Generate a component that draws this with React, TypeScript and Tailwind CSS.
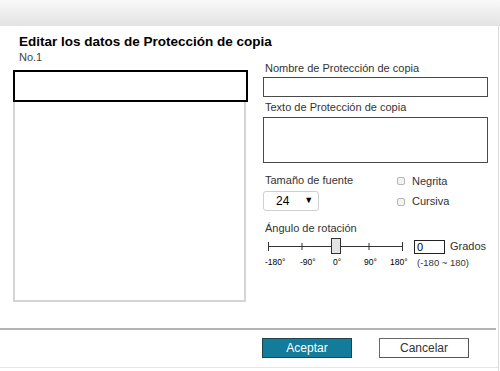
import React from "react";

const font = { fontFamily: '"Liberation Sans", Arial, sans-serif' };

export default function App() {
  return (
    <div className="w-[500px] h-[371px] bg-white flex flex-col overflow-hidden text-[#333]" style={font}>
      <div className="h-[26px] shrink-0 bg-gradient-to-b from-[#f9f9f9] to-[#e3e3e3]" />
      <div className="w-[499px] flex-1 flex flex-col border-r border-[#d9d9d9]">
        <div className="h-[302px] flex flex-col">
          <div className="pl-[19px] pt-[8px] h-[24px] text-[13.5px] leading-[16px] font-bold text-black">
            Editar los datos de Protección de copia
          </div>
          <div className="flex">
            <div className="ml-[13px] w-[235px] flex flex-col">
              <div className="pl-[6px] text-[11px] leading-[14px] h-[14px] text-[#444]">No.1</div>
              <div className="mt-[6px] h-[32px] border-2 border-black bg-white" />
              <div className="w-[233px] h-[200px] border-2 border-t-0 border-[#d4d4d4]" />
            </div>
            <div className="ml-[15px] w-[225px] pt-[12px] flex flex-col text-[11px]">
              <div className="h-[13px] leading-[13px] pl-[2px]">Nombre de Protección de copia</div>
              <div className="mt-[2px] h-[20px] border border-[#4a4a4a]" />
              <div className="mt-[4px] h-[13px] leading-[13px] pl-[2px]">Texto de Protección de copia</div>
              <div className="mt-[3px] h-[46px] border border-[#4a4a4a]" />
              <div className="mt-[11px] flex">
                <div className="w-[134px] flex flex-col">
                  <div className="h-[13px] leading-[13px] pl-[2px]">Tamaño de fuente</div>
                  <div className="mt-[4px] w-[56px] h-[20px] rounded-[3px] border border-[#cfcfcf] flex items-center text-[12px] text-black">
                    <span className="ml-[12px]">24</span>
                    <span className="ml-[15px] text-[9px]">▼</span>
                  </div>
                </div>
                <div className="flex flex-col">
                  <div className="h-[14px] flex items-center">
                    <span className="w-[8px] h-[8px] rounded-[2px] border border-[#b5b5b5] bg-[#f3f3f3]" />
                    <span className="ml-[7px] leading-[13px]">Negrita</span>
                  </div>
                  <div className="mt-[7px] h-[13px] flex items-center">
                    <span className="w-[8px] h-[8px] rounded-[2px] border border-[#b5b5b5] bg-[#f3f3f3]" />
                    <span className="ml-[7px] leading-[13px]">Cursiva</span>
                  </div>
                </div>
              </div>
              <div className="mt-[11px] h-[13px] leading-[13px] pl-[2px]">Ángulo de rotación</div>
              <div className="mt-[3px] h-[17px] flex items-center">
                <svg width="146" height="17" viewBox="0 0 146 17" className="shrink-0">
                  <line x1="5" y1="8.5" x2="140" y2="8.5" stroke="#333" strokeWidth="1" />
                  <line x1="5.5" y1="4" x2="5.5" y2="13" stroke="#333" strokeWidth="1" />
                  <line x1="39" y1="5" x2="39" y2="12" stroke="#333" strokeWidth="1" />
                  <line x1="106" y1="5" x2="106" y2="12" stroke="#333" strokeWidth="1" />
                  <line x1="139.5" y1="4" x2="139.5" y2="13" stroke="#333" strokeWidth="1" />
                  <rect x="68.5" y="0.5" width="9" height="15" fill="#e3e3e3" stroke="#333" strokeWidth="1" />
                </svg>
                <div className="ml-[5px] w-[31px] h-[14px] border border-[#222] text-[11px] leading-[12px] pl-[2px] text-black">0</div>
                <span className="ml-[5px] text-[11px]">Grados</span>
              </div>
              <div className="relative h-[11px] mt-[2px] text-[8.5px] leading-[11px] text-black">
                <span className="absolute left-[2px] top-0">-180°</span>
                <span className="absolute left-[37px] top-0">-90°</span>
                <span className="absolute left-[70px] top-0">0°</span>
                <span className="absolute left-[101px] top-0">90°</span>
                <span className="absolute left-[127px] top-0">180°</span>
                <span className="absolute left-[154px] top-0 text-[9.5px] text-[#333]">(-180 ~ 180)</span>
              </div>
            </div>
          </div>
        </div>
        <div className="w-[496px] h-[2px] bg-[#b3b3b3]" />
        <div className="h-[38px] border-b border-[#e6e6e6] flex pl-[262px] pt-[8px] gap-[27px]">
          <button className="w-[90px] h-[20px] bg-[#137c9b] border border-[#22434c] text-white text-[12px] leading-[18px]">
            Aceptar
          </button>
          <button className="w-[90px] h-[20px] bg-white border border-[#6a6a6a] border-r-[#555] border-b-[#555] text-[#333] text-[12px] leading-[18px]">
            Cancelar
          </button>
        </div>
      </div>
    </div>
  );
}
